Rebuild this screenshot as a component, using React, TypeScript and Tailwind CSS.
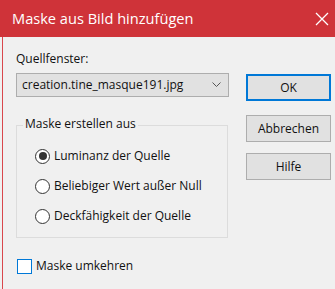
import React from "react";

function Radio({ checked, label }: { checked?: boolean; label: string }) {
  return (
    <div className="flex items-center h-[16px]">
      <div className="w-[15px] h-[15px] rounded-full border border-[#333333] bg-white flex items-center justify-center">
        {checked && <div className="w-[8px] h-[8px] rounded-full bg-[#333333]" />}
      </div>
      <span className="ml-[4px] leading-[16px]">{label}</span>
    </div>
  );
}

function Btn({ label, focused }: { label: string; focused?: boolean }) {
  return (
    <div
      className={
        "w-[85px] h-[27px] flex items-center justify-center bg-[#e1e1e1] " +
        (focused ? "border-2 border-[#0078d7]" : "border border-[#adadad]")
      }
    >
      {label}
    </div>
  );
}

export default function App() {
  return (
    <div
      className="w-[335px] h-[289px] bg-[#f0f0f0] text-[12px] text-[#111111] overflow-hidden flex flex-col"
      style={{ fontFamily: '"Open Sans", sans-serif' }}
    >
      <div className="h-[37px] bg-[#cf3339] flex items-center justify-between shrink-0">
        <span className="ml-[12px] text-[14.6px] text-white leading-none mb-[1px]">Maske aus Bild hinzufügen</span>
        <svg width="14" height="14" viewBox="0 0 14 14" className="mr-[6px]">
          <path d="M1 1 L13 13 M13 1 L1 13" stroke="white" strokeWidth="1.3" />
        </svg>
      </div>
      <div className="flex-1 ml-[2px] border-l border-[#d9474c] flex">
        <div className="w-[230px] pl-[13px] flex flex-col">
          <div className="mt-[14px] h-[16px] leading-[16px]">Quellfenster:</div>
          <div className="mt-[6px] w-[213px] h-[24px] bg-[#e1e1e1] border border-[#adadad] flex items-center justify-between">
            <span className="ml-[5px] leading-[16px]">creation.tine_masque191.jpg</span>
            <svg width="9" height="6" viewBox="0 0 9 6" className="mr-[7px]">
              <path d="M0.5 0.5 L4.5 4.5 L8.5 0.5" fill="none" stroke="#555" strokeWidth="1" />
            </svg>
          </div>
          <div className="relative mt-[28px] w-[212px] h-[113px] border border-[#dcdcdc]">
            <span className="absolute left-[6px] top-[-10px] px-[2px] bg-[#f0f0f0] leading-[16px]">Maske erstellen aus</span>
            <div className="flex flex-col pl-[18px] pt-[22px] gap-[14px]">
              <Radio checked label="Luminanz der Quelle" />
              <Radio label="Beliebiger Wert außer Null" />
              <Radio label="Deckfähigkeit der Quelle" />
            </div>
          </div>
          <div className="mt-[20px] flex items-center">
            <div className="w-[15px] h-[15px] bg-white border border-[#0078d7] ml-[1px]" />
            <span className="ml-[4px] leading-[16px]">Maske umkehren</span>
          </div>
        </div>
        <div className="flex flex-col pl-[13px] pt-[37px]">
          <Btn label="OK" focused />
          <div className="mt-[14px]"><Btn label="Abbrechen" /></div>
          <div className="mt-[11px]"><Btn label="Hilfe" /></div>
        </div>
      </div>
    </div>
  );
}
